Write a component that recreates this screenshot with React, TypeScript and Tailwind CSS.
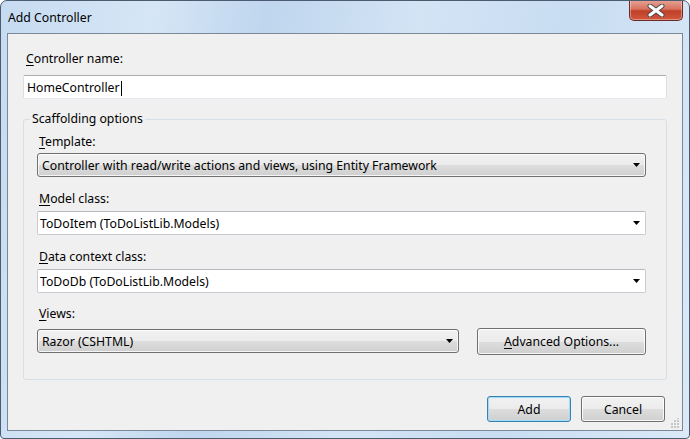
import React from "react";

const font = { fontFamily: '"Noto Sans", "Liberation Sans", sans-serif' };

function Arrow() {
  return (
    <svg width="7" height="4" viewBox="0 0 7 4" className="shrink-0">
      <path d="M0 0h7L3.5 4z" fill="#000" />
    </svg>
  );
}

function Label({ k, rest, className = "" }: { k: string; rest: string; className?: string }) {
  return (
    <div className={`h-[16px] pl-[2px] text-[12.25px] leading-[16px] text-black ${className}`}>
      <span className="underline underline-offset-[2px]">{k}</span>
      {rest}
    </div>
  );
}

function ListCombo({ text, className = "" }: { text: string; className?: string }) {
  return (
    <div
      className={`flex h-[24px] items-center justify-between rounded-[3px] border border-[#707070] bg-[linear-gradient(#f2f2f2_0%,#ebebeb_50%,#dddddd_50%,#cfcfcf_100%)] pl-[4px] pr-[5px] text-[12.25px] text-black shadow-[inset_0_0_0_1px_rgba(255,255,255,0.8)] ${className}`}
    >
      <span className="pt-[2px]">{text}</span>
      <Arrow />
    </div>
  );
}

function EditCombo({ text, className = "" }: { text: string; className?: string }) {
  return (
    <div
      className={`flex h-[24px] items-center justify-between rounded-[2px] border border-[#c9ccd2] border-t-[#b5b8bf] bg-white pl-[2px] pr-[5px] text-[12.25px] text-black ${className}`}
    >
      <span className="pt-[2px]">{text}</span>
      <Arrow />
    </div>
  );
}

function Button({ children, primary = false, className = "" }: { children: React.ReactNode; primary?: boolean; className?: string }) {
  return (
    <button
      className={`flex items-center justify-center rounded-[3px] border pt-[2px] text-[12.25px] text-black bg-[linear-gradient(#f2f2f2_0%,#ebebeb_50%,#dddddd_50%,#cfcfcf_100%)] ${
        primary
          ? "border-[#3c7fb1] shadow-[inset_0_0_0_1px_#9fdcf7,inset_0_0_3px_#c6ecfb]"
          : "border-[#707070] shadow-[inset_0_0_0_1px_rgba(255,255,255,0.85)]"
      } ${className}`}
    >
      {children}
    </button>
  );
}

export default function App() {
  return (
    <div
      style={font}
      className="flex h-[439px] w-[690px] flex-col overflow-hidden rounded-t-[7px] rounded-b-[4px] border border-[#4c5c70] bg-[linear-gradient(100deg,#c6dbf1_0%,#d6e6f6_20%,#bfd6ee_35%,#d3e4f5_55%,#c8ddf2_75%,#dbe9f8_100%)] px-[6px] pb-[7px]"
    >
      {/* title bar */}
      <div className="flex h-[32px] shrink-0 justify-between">
        <div className="pl-[1px] pt-[9px] text-[12.25px] leading-[16px] text-black">Add Controller</div>
        <div className="-mt-px flex h-[21px] w-[54px] items-center justify-center rounded-b-[5px] border border-t-0 border-[#6b2a22] bg-[linear-gradient(#e6a497_0%,#d8735f_45%,#c13f27_55%,#d0583f_100%)] shadow-[inset_0_0_0_1px_rgba(255,255,255,0.35)]">
          <svg width="18" height="13" viewBox="0 0 18 13">
            <path d="M3 2l12 9M15 2L3 11" stroke="#4b4b4b" strokeWidth="5" strokeLinecap="round" />
            <path d="M3 2l12 9M15 2L3 11" stroke="#fff" strokeWidth="3" strokeLinecap="round" />
          </svg>
        </div>
      </div>

      {/* client area */}
      <div className="relative flex flex-1 flex-col border border-[#7a8898] bg-[#f0f0f0] px-[15px] pb-[7px]">
        <Label k="C" rest="ontroller name:" className="mt-[17px] pl-[3px]" />
        <div className="mt-[8px] flex h-[24px] items-center rounded-[2px] border border-[#dbdfe6] border-t-[#abadb3] border-b-[#e3e9ef] bg-white pl-[3px] pt-[2px] text-[12.25px] text-black">
          HomeController
          <span className="ml-px inline-block h-[15px] w-px bg-black" />
        </div>

        <fieldset className="mt-[12px] rounded-[3px] border border-[#d5dfe5]">
          <legend className="ml-[6px] px-[2px] text-[12.25px] leading-[16px] text-black">Scaffolding options</legend>

          <div className="pb-[24px] pl-[13px] pr-[20px]">
            <Label k="T" rest="emplate:" className="mt-[7px]" />
            <ListCombo text="Controller with read/write actions and views, using Entity Framework" className="mt-[3px]" />

            <Label k="M" rest="odel class:" className="mt-[14px]" />
            <EditCombo text="ToDoItem (ToDoListLib.Models)" className="mt-[4px]" />

            <Label k="D" rest="ata context class:" className="mt-[14px]" />
            <EditCombo text="ToDoDb (ToDoListLib.Models)" className="mt-[4px]" />

            <Label k="V" rest="iews:" className="mt-[13px]" />
            <div className="mt-[6px] flex items-start gap-[18px]">
              <ListCombo text="Razor (CSHTML)" className="mt-px w-[422px]" />
              <Button className="h-[27px] flex-1">
                <span className="underline underline-offset-[2px]">A</span>dvanced Options...
              </Button>
            </div>
          </div>
        </fieldset>

        <div className="mt-[16px] flex justify-end gap-[10px] pr-[2px]">
          <Button primary className="h-[26px] w-[84px]">Add</Button>
          <Button className="h-[26px] w-[84px]">Cancel</Button>
        </div>

        {/* size grip */}
        <svg width="10" height="10" viewBox="0 0 10 10" className="absolute bottom-[2px] right-[2px]">
          {[
            [8, 0], [8, 3], [5, 3], [8, 6], [5, 6], [2, 6], [8, 9], [5, 9], [2, 9],
          ].map(([x, y], i) => (
            <rect key={i} x={x - 1} y={y - 1} width="2" height="2" fill="#c2c7cc" />
          ))}
        </svg>
      </div>
    </div>
  );
}
